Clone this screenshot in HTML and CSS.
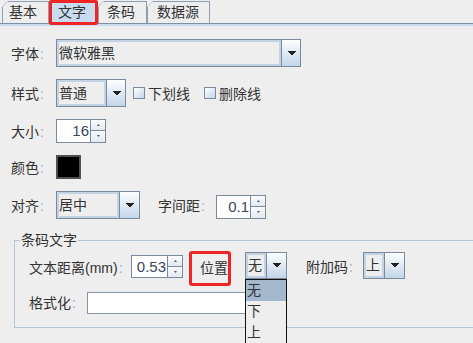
FILE: index.html
```html
<!DOCTYPE html>
<html lang="zh">

<head>
    <meta charset="UTF-8" />
    <title>文字</title>
    <link rel="stylesheet" href="styles.css">
</head>

<body>
    <!-- 选项卡 -->
    <div class="tabs">
        <div class="tab t1">基本</div>
        <div class="tab sel">文字</div>
        <div class="tab">条码</div>
        <div class="tab t4">数据源</div>
    </div>
    <div class="tabline"></div>

    <div class="panel">
        <div class="row r-font">
            <span class="lbl">字体<i>:</i></span>
            <div class="combo w-font">
                <div class="val">微软雅黑</div>
                <div class="arr"><svg width="9" height="5"><polygon points="0,0 9,0 4.5,4.5" /></svg></div>
            </div>
        </div>

        <div class="row r-style">
            <span class="lbl">样式<i>:</i></span>
            <div class="combo w-style">
                <div class="val">普通</div>
                <div class="arr"><svg width="9" height="5"><polygon points="0,0 9,0 4.5,4.5" /></svg></div>
            </div>
            <span class="chk c1"></span><span class="ctext">下划线</span>
            <span class="chk c2"></span><span class="ctext">删除线</span>
        </div>

        <div class="row r-size">
            <span class="lbl">大小<i>:</i></span>
            <div class="spin w-size">
                <div class="txt">16</div>
                <div class="btns">
                    <span class="up"><svg width="3" height="2"><polygon points="1.5,0 3,2 0,2" /></svg></span>
                    <span class="down"><svg width="3" height="2"><polygon points="0,0 3,0 1.5,2" /></svg></span>
                </div>
            </div>
        </div>

        <div class="row r-color">
            <span class="lbl">颜色<i>:</i></span>
            <span class="swatch"></span>
        </div>

        <div class="row r-align">
            <span class="lbl">对齐<i>:</i></span>
            <div class="combo w-align">
                <div class="val">居中</div>
                <div class="arr"><svg width="9" height="5"><polygon points="0,0 9,0 4.5,4.5" /></svg></div>
            </div>
            <span class="lbl2">字间距<i>:</i></span>
            <div class="spin w-space">
                <div class="txt">0.1</div>
                <div class="btns">
                    <span class="up"><svg width="3" height="2"><polygon points="1.5,0 3,2 0,2" /></svg></span>
                    <span class="down"><svg width="3" height="2"><polygon points="0,0 3,0 1.5,2" /></svg></span>
                </div>
            </div>
        </div>

        <!-- 条码文字 分组 -->
        <div class="group">
            <span class="title">条码文字</span>
            <div class="grow g1">
                <span class="glbl l-dist">文本距离(mm)<i>:</i></span>
                <div class="spin w-dist">
                    <div class="txt">0.53</div>
                    <div class="btns">
                        <span class="up"><svg width="3" height="2"><polygon points="1.5,0 3,2 0,2" /></svg></span>
                        <span class="down"><svg width="3" height="2"><polygon points="0,0 3,0 1.5,2" /></svg></span>
                    </div>
                </div>
                <span class="mark">位置</span>
                <div class="combo w-pos">
                    <div class="val">无</div>
                    <div class="arr"><svg width="9" height="5"><polygon points="0,0 9,0 4.5,4.5" /></svg></div>
                    <ul class="popup">
                        <li class="on">无</li>
                        <li>下</li>
                        <li>上</li>
                    </ul>
                </div>
                <span class="glbl l-add">附加码<i>:</i></span>
                <div class="combo w-add">
                    <div class="val">上</div>
                    <div class="arr"><svg width="9" height="5"><polygon points="0,0 9,0 4.5,4.5" /></svg></div>
                </div>
            </div>
            <div class="grow g2">
                <span class="glbl l-fmt">格式化<i>:</i></span>
                <div class="field"></div>
            </div>
        </div>
    </div>
</body>

</html>
```

FILE: styles.css
```css
* {
    margin: 0;
    padding: 0;
    box-sizing: border-box;
}

body {
    width: 473px;
    height: 343px;
    overflow: hidden;
    background: #eeeeee;
    color: #333;
    font: 14px "Liberation Sans", "Noto Sans CJK SC", sans-serif;
}

ul {
    list-style: none;
}

i {
    font-style: normal;
    color: #a0a8b8;
    margin-left: 1px;
}

/* 选项卡 */
.tabs {
    display: flex;
    align-items: flex-end;
    height: 23px;
    padding-left: 2px;
}

.tab {
    width: 49px;
    height: 22px;
    padding-left: 8px;
    line-height: 20px;
    white-space: nowrap;
    border: 1px solid #8e9fb3;
    border-bottom: none;
    background-color: #eee;
    background-image: linear-gradient(135deg, #eee 3.6px, #8e9fb3 3.6px, #8e9fb3 4.6px, transparent 4.6px);
    background-origin: border-box;
    clip-path: polygon(6px 0, 100% 0, 100% 100%, 0 100%, 0 6px);
}

.tab.t1 {
    width: 47px;
    padding-left: 6px;
}

.tab.t4 {
    width: 63px;
    padding-left: 9px;
}

.tab.sel {
    height: 25px;
    margin-bottom: -2px;
    position: relative;
    z-index: 1;
    padding-left: 6px;
    line-height: 19px;
    border: 3px solid #f02424;
    border-radius: 2px;
    background: #c8dbef;
    clip-path: none;
}

.tabline {
    height: 3px;
    border-top: 1px solid #7d90a6;
    background: #c8dbef;
}

/* 面板 */
.panel {
    padding-left: 11px;
}

.row {
    display: flex;
    align-items: center;
}

.lbl {
    width: 45px;
}

.r-font {
    margin-top: 13px;
    height: 28px;
}

.r-style {
    margin-top: 12px;
    height: 28px;
}

.r-size {
    margin-top: 11px;
    height: 25px;
}

.r-color {
    margin-top: 12px;
    height: 24px;
}

.r-align {
    margin-top: 12px;
    height: 28px;
}

/* 下拉框 */
.combo {
    display: flex;
    height: 28px;
    border: 1px solid #7a8a9b;
    background: #eee;
    position: relative;
}

.combo .val {
    flex: 1;
    border: 2px solid #c3d3e4;
    line-height: 22px;
}

.combo .arr {
    width: 19px;
    border-left: 1px solid #7a8a9b;
    background: linear-gradient(#fdfeff, #c2d5e9);
    display: flex;
    align-items: center;
    justify-content: center;
}

.combo .arr svg {
    fill: #222;
    shape-rendering: crispEdges;
}

.w-font {
    width: 245px;
}

.w-style {
    width: 70px;
}

.w-align {
    width: 84px;
}

.w-align .arr {
    width: 20px;
}

/* 复选框 */
.chk {
    width: 12px;
    height: 12px;
    border: 1px solid #7a8a9b;
    background: linear-gradient(135deg, #ffffff, #c2d5e9);
}

.c1 {
    margin-left: 7px;
}

.c2 {
    margin-left: 14px;
}

.ctext {
    margin-left: 3px;
}

/* 数字框 */
.spin {
    display: flex;
    height: 24px;
}

.spin .txt {
    flex: 1;
    background: #fff;
    border: 1px solid #7a8a9b;
    border-right: none;
    text-align: right;
    padding-right: 1px;
    line-height: 22px;
    font-size: 15px;
    color: #3a4660;
}

.spin .btns {
    width: 16px;
    border: 1px solid #7a8a9b;
    display: flex;
    flex-direction: column;
    background: #eee;
}

.spin .btns span {
    flex: 1;
    display: flex;
    align-items: center;
    justify-content: center;
    background: linear-gradient(#fafcff, #e2e9f1);
}

.spin .btns .up {
    border-bottom: 1px solid #7a8a9b;
}

.spin .btns svg {
    fill: #556;
}

.w-size {
    width: 50px;
}

.w-space {
    width: 50px;
    height: 24px;
    margin-top: 3px;
}

.lbl2 {
    margin-left: 18px;
    width: 58px;
}

.swatch {
    width: 25px;
    height: 24px;
    border: 2px solid #505050;
    background: #000;
}

/* 条码文字 分组 */
.group {
    margin: 21px 0 0 3px;
    width: 459px;
    height: 88px;
    border: 1px solid #b6c6d9;
    border-right: none;
    padding-left: 14px;
}

.group .title {
    display: block;
    width: max-content;
    margin: -9px 0 0 -9px;
    padding: 0 1px;
    height: 16px;
    line-height: 16px;
    background: #eee;
}

.grow {
    display: flex;
    align-items: flex-start;
}

.g1 {
    margin-top: 3px;
    height: 35px;
}

.g2 {
    margin-top: 6px;
    height: 22px;
    align-items: center;
}

.glbl {
    line-height: 35px;
    white-space: nowrap;
}

.l-dist {
    width: 102px;
}

.l-add {
    width: 57px;
    margin-left: 19px;
    line-height: 33px;
}

.l-fmt {
    width: 58px;
    line-height: 22px;
}

.w-dist {
    width: 52px;
    height: 23px;
    margin-top: 4px;
}

.mark {
    width: 42px;
    height: 35px;
    margin-left: 6px;
    padding-left: 8px;
    line-height: 29px;
    white-space: nowrap;
    border: 3px solid #f02424;
    border-radius: 3px;
}

.w-pos,
.w-add {
    width: 42px;
    height: 27px;
    margin-top: 1px;
}

.w-pos {
    margin-left: 14px;
}

.w-pos .val,
.w-add .val {
    line-height: 21px;
    padding-left: 0;
}

.w-pos .arr,
.w-add .arr {
    width: 20px;
}

/* 弹出列表 */
.popup {
    position: absolute;
    top: 26px;
    left: -1px;
    width: 42px;
    border: 1px solid #111;
    border-bottom: none;
    background: #eee;
    z-index: 2;
}

.popup li {
    height: 21px;
    line-height: 21px;
    padding-left: 1px;
}

.popup li.on {
    background: #a3b8cd;
}

.field {
    width: 193px;
    height: 22px;
    background: #fff;
    border: 1px solid #8595a7;
}
```
